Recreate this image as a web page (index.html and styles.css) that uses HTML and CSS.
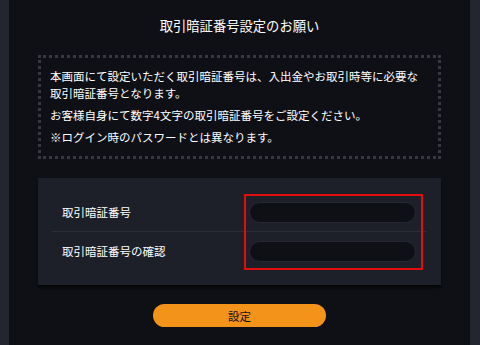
FILE: index.html
```html
<!DOCTYPE html>
<html lang="ja">
<head>
<meta charset="utf-8">
<link rel="stylesheet" href="styles.css">
</head>
<body>
<div class="panel">
  <h1 class="title">取引暗証番号設定のお願い</h1>
  <div class="notice">
    <p>本画面にて設定いただく取引暗証番号は、入出金やお取引時等に必要な<br>取引暗証番号となります。</p>
    <p>お客様自身にて数字4文字の取引暗証番号をご設定ください。</p>
    <p>※ログイン時のパスワードとは異なります。</p>
  </div>
  <div class="form">
    <div class="row">
      <label class="label">取引暗証番号</label>
      <input class="input" type="password">
    </div>
    <div class="row last">
      <label class="label">取引暗証番号の確認</label>
      <input class="input" type="password">
    </div>
    <div class="highlight"></div>
  </div>
  <div class="actions">
    <button class="btn">設定</button>
  </div>
</div>
</body>
</html>
```

FILE: styles.css
```css
html, body {
  margin: 0;
  padding: 0;
  background: #23262f;
  height: 345px;
  overflow: hidden;
  font-family: "Noto Sans CJK JP", "Noto Sans", sans-serif;
  color: #ffffff;
}
.panel {
  margin: 0 10px 0 9px;
  height: 345px;
  background: #0f1015;
  padding: 0 29px;
  box-sizing: border-box;
}
.title {
  margin: 0;
  padding-top: 16px;
  height: 55px;
  box-sizing: border-box;
  font-size: 13.3px;
  line-height: 20px;
  font-weight: normal;
  text-align: center;
}
.notice {
  border: 3px dotted #363944;
  height: 104px;
  box-sizing: border-box;
  padding: 10px 8px 0 9px;
  font-size: 11.5px;
  line-height: 17px;
}
.notice p {
  margin: 0 0 5px;
}
.form {
  position: relative;
  margin-top: 19px;
  background: #1d2029;
  padding: 15px 14px 14px;
  box-shadow: 0 3px 2px rgba(0,0,0,0.6);
}
.row {
  display: flex;
  align-items: center;
  justify-content: space-between;
  padding: 9px 11px 8px 10px;
  border-bottom: 1px solid #2b2e39;
}
.row.last {
  border-bottom: none;
  padding-bottom: 9px;
}
.label {
  font-size: 11.5px;
  line-height: 17px;
}
.input {
  width: 167px;
  height: 21px;
  box-sizing: border-box;
  border: 1px solid #262934;
  border-radius: 11px;
  background: #0f1015;
  outline: none;
  padding: 0 10px;
  color: #fff;
}
.highlight {
  position: absolute;
  left: 206px;
  top: 16px;
  width: 179px;
  height: 76px;
  box-sizing: border-box;
  border: 2px solid #e10e0e;
}
.actions {
  display: flex;
  justify-content: center;
  margin-top: 19px;
}
.btn {
  width: 173px;
  height: 23px;
  border: none;
  border-radius: 12px;
  background: #f3931a;
  color: #111;
  font-family: "Noto Sans CJK JP", "Noto Sans", sans-serif;
  font-size: 11.5px;
  padding: 0;
}
```
